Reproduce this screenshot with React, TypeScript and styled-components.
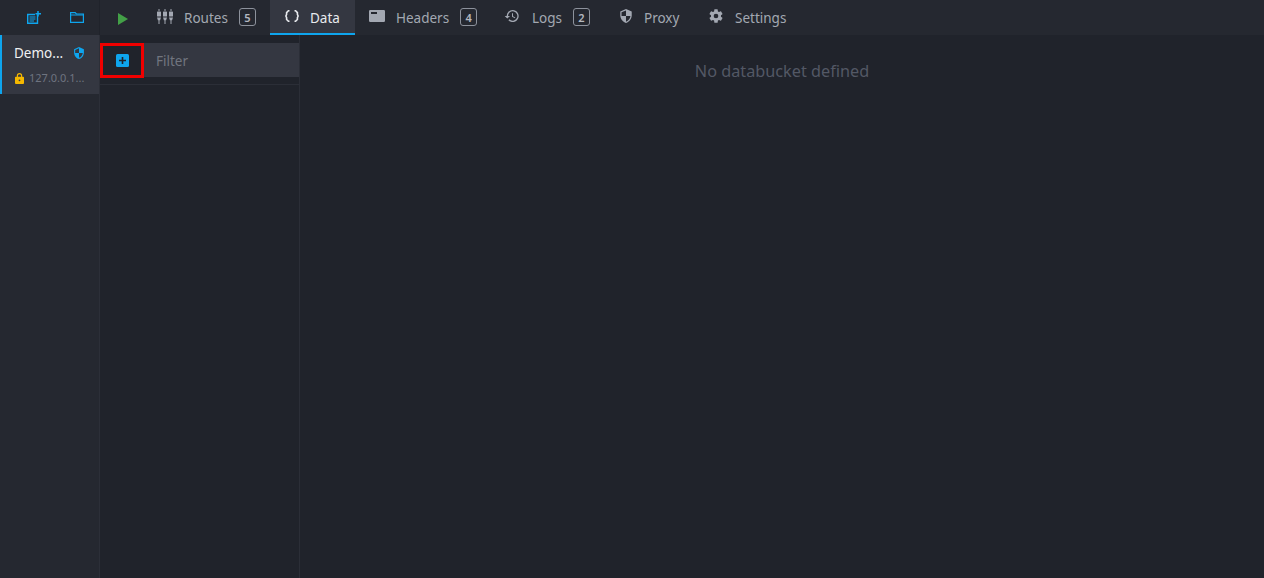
import React from "react";
import styled, { createGlobalStyle } from "styled-components";

const Global = createGlobalStyle`
  html, body { margin: 0; padding: 0; height: 100%; background: #20232b; overflow: hidden; }
  #root { height: 100%; }
  * { box-sizing: border-box; }
`;

const Page = styled.div`
  width: 1264px;
  height: 578px;
  display: grid;
  grid-template-columns: 100px 200px 1fr;
  grid-template-rows: 35px 1fr;
  font-family: "Noto Sans", "Open Sans", sans-serif;
  font-size: 13.5px;
  background: #20232b;
  color: #c5c8cf;
`;

const EnvTools = styled.div`
  background: #252830;
  border-right: 1px solid #20232b;
  display: flex;
  align-items: center;
  justify-content: flex-end;
  gap: 29px;
  padding: 0 15px 0 0;
`;

const TopBar = styled.nav`
  grid-column: 2 / 4;
  background: #252830;
  display: flex;
  align-items: stretch;
`;

const PlayButton = styled.div`
  width: 43px;
  display: flex;
  align-items: center;
  padding: 2px 0 0 18px;
`;

const Tab = styled.div<{ $active?: boolean; $w: number }>`
  width: ${(p) => p.$w}px;
  height: 35px;
  display: flex;
  align-items: center;
  padding: 2px 0 0 14px;
  background: ${(p) => (p.$active ? "#343741" : "transparent")};
  border-bottom: 2px solid ${(p) => (p.$active ? "#0ea5ee" : "transparent")};
  color: ${(p) => (p.$active ? "#e8eaee" : "#a3a8b2")};
`;

const TabIcon = styled.span<{ $w?: number; $shift?: number }>`
  width: ${(p) => p.$w ?? 27}px;
  display: flex;
  align-items: center;
  margin-top: -3px;
  & > svg {
    flex-shrink: 0;
    margin-left: ${(p) => p.$shift ?? 0}px;
  }
`;

const Badge = styled.span`
  width: 17px;
  height: 18px;
  margin: -1px 0 0 11px;
  border: 1px solid #8d929c;
  border-radius: 3px;
  display: flex;
  align-items: center;
  justify-content: center;
  font-size: 11px;
  font-weight: 600;
  color: #b4b8c0;
`;

const EnvList = styled.aside`
  background: #252830;
  border-right: 1px solid #2c2f38;
`;

const EnvRow = styled.div`
  height: 59px;
  background: #343741;
  border-left: 2px solid #0ea5ee;
  padding: 9px 0 0 12px;
`;

const EnvName = styled.div`
  display: flex;
  align-items: center;
  justify-content: space-between;
  padding-right: 14px;
  color: #f0f1f3;
  line-height: 18px;
`;

const EnvHost = styled.div`
  display: flex;
  align-items: center;
  gap: 5px;
  margin: 9px 0 0 1px;
  color: #6f7480;
  font-size: 11px;
  line-height: 14px;
  white-space: nowrap;
`;

const MenuColumn = styled.section`
  border-right: 1px solid #2b2e37;
  padding-top: 8px;
`;

const FilterRow = styled.div`
  display: flex;
  height: 35px;
`;

const AddButton = styled.div`
  width: 44px;
  height: 35px;
  border: 3px solid #f00000;
  display: flex;
  align-items: center;
  justify-content: center;
`;

const Filter = styled.div`
  flex: 1;
  height: 34px;
  background: #343741;
  color: #71757f;
  padding: 2px 0 0 12px;
  display: flex;
  align-items: center;
`;

const Divider = styled.div`
  height: 1px;
  background: #2b2e37;
  margin-top: 6px;
`;

const Main = styled.main`
  display: flex;
  justify-content: center;
  padding-top: 23px;
  color: #535865;
  font-size: 16.25px;
  line-height: 26px;
`;

const blue = "#0ea5ee";
const grey = "#a3a8b2";

const NewEnvIcon = () => (
  <svg width="14" height="13" viewBox="0 0 14 13" fill="none">
    <path d="M10.500 3.500V12.300H.7V3.500H8" stroke={blue} strokeWidth="1.400" />
    <path d="M2.500 6h6M2.500 8h6M2.500 10h4.500" stroke={blue} strokeWidth="1.100" />
    <path d="M11 0v5.500M8.500 2.700H14" stroke={blue} strokeWidth="1.500" />
  </svg>
);
const FolderIcon = () => (
  <svg width="14" height="11" viewBox="0 0 14 11" fill="none">
    <path d="M.6 10.400V.6h4.600l1.200 1.400h7v8.400z" stroke={blue} strokeWidth="1.200" />
    <path d="M1 3h12" stroke={blue} strokeWidth="1" />
  </svg>
);
const PlayIcon = () => (
  <svg width="10" height="12" viewBox="0 0 10 12">
    <path d="M0 0l10 6-10 6z" fill="#43a047" />
  </svg>
);
const RoutesIcon = () => (
  <svg width="16" height="15" viewBox="0 0 16 15" fill={grey}>
    <path d="M1.500 0h1v2h-1zM7.500 0h1v2h-1zM13.500 0h1v2h-1z" />
    <rect x="0" y="2.500" width="4" height="5" rx=".6" />
    <rect x="6" y="2.500" width="4" height="5" rx=".6" />
    <rect x="12" y="2.500" width="4" height="5" rx=".6" />
    <path d="M0 8.500h4l-1 3h-2zM6 8.500h4l-1 3h-2zM12 8.500h4l-1 3h-2z" />
    <path d="M1.500 11.500h1v3.500h-1zM7.500 11.500h1v3.500h-1zM13.500 11.500h1v3.500h-1z" />
  </svg>
);
const BracesIcon = () => (
  <svg width="14" height="12" viewBox="0 0 14 12" fill="none" stroke="#e8eaee" strokeWidth="1.600">
    <path d="M4.500.8H3.400L1.600 2.600v1.800L.9 6l.7 1.600v1.800l1.800 1.800h1.100" />
    <path d="M9.500.8h1.100l1.800 1.800v1.800l.7 1.600-.7 1.600v1.800l-1.800 1.800H9.500" />
  </svg>
);
const HeadersIcon = () => (
  <svg width="16" height="12" viewBox="0 0 16 12">
    <path fillRule="evenodd" fill={grey} d="M1.200 0h13.600A1.200 1.200 0 0 1 16 1.200v9.600a1.200 1.200 0 0 1-1.200 1.200H1.200A1.200 1.200 0 0 1 0 10.800V1.200A1.200 1.200 0 0 1 1.200 0zM2 2v2h6V2z" />
  </svg>
);
const HistoryIcon = () => (
  <svg width="16" height="16" viewBox="0 0 24 24" fill={grey}>
    <path d="M13 3a9 9 0 0 0-9 9H1l3.900 3.900L9 12H6a7 7 0 1 1 2.050 4.950L6.640 18.360A9 9 0 1 0 13 3zm-1 5v5l4.280 2.540.72-1.210-3.500-2.080V8z" />
  </svg>
);
const ShieldIcon = ({ color, size, cut }: { color: string; size: number; cut: string }) => (
  <svg width={size} height={size} viewBox="2 1 20 22">
    <path fill={color} d="M12 1L3 5v6c0 5.550 3.840 10.740 9 12 5.160-1.260 9-6.450 9-12V5z" />
    <path fill={cut} d="M12 3.200V12H5V6.300zM12 12h7c-.5 4.100-3.300 7.800-7 8.900z" />
  </svg>
);
const GearIcon = () => (
  <svg width="16" height="16" viewBox="0 0 24 24" fill={grey}>
    <path d="M19.430 12.980c.04-.32.07-.64.07-.98s-.03-.66-.07-.98l2.110-1.650a.5.5 0 0 0 .12-.64l-2-3.460a.5.5 0 0 0-.61-.22l-2.490 1a7.300 7.300 0 0 0-1.690-.98l-.38-2.650A.49.49 0 0 0 14 2h-4a.49.49 0 0 0-.49.420l-.38 2.650c-.61.250-1.170.590-1.690.980l-2.490-1a.5.5 0 0 0-.61.220l-2 3.460a.49.49 0 0 0 .12.640l2.110 1.650c-.04.320-.07.650-.07.980s.03.660.07.980l-2.110 1.650a.5.5 0 0 0-.12.640l2 3.460c.12.220.39.300.61.220l2.490-1c.52.400 1.080.730 1.690.980l.38 2.650c.03.240.24.420.49.420h4c.25 0 .46-.18.49-.42l.38-2.650c.61-.25 1.170-.59 1.690-.98l2.490 1c.23.090.49 0 .61-.22l2-3.460a.5.5 0 0 0-.12-.64zM12 15.500a3.500 3.500 0 1 1 0-7 3.500 3.500 0 0 1 0 7z" />
  </svg>
);
const LockIcon = () => (
  <svg width="9" height="11" viewBox="0 0 10 12">
    <path fill="#f5b800" fillRule="evenodd" d="M2 4V3a3 3 0 0 1 6 0v1h1a1 1 0 0 1 1 1v6a1 1 0 0 1-1 1H1a1 1 0 0 1-1-1V5a1 1 0 0 1 1-1zm1.300 0h3.400V3a1.700 1.700 0 0 0-3.400 0zM5 7a1 1 0 1 0 0 2 1 1 0 0 0 0-2z" />
  </svg>
);
const AddIcon = () => (
  <svg width="13" height="13" viewBox="0 0 13 13">
    <rect width="13" height="13" rx="1.500" fill="#0ea5ee" />
    <path d="M6.500 3v7M3 6.500h7" stroke="#20232b" strokeWidth="1.600" />
  </svg>
);

export default function App() {
  return (
    <Page>
      <Global />
      <EnvTools>
        <NewEnvIcon />
        <FolderIcon />
      </EnvTools>
      <TopBar>
        <PlayButton><PlayIcon /></PlayButton>
        <Tab $w={127}>
          <TabIcon><RoutesIcon /></TabIcon>Routes<Badge>5</Badge>
        </Tab>
        <Tab $w={85} $active>
          <TabIcon $w={26} $shift={1}><BracesIcon /></TabIcon>Data
        </Tab>
        <Tab $w={136}>
          <TabIcon><HeadersIcon /></TabIcon>Headers<Badge>4</Badge>
        </Tab>
        <Tab $w={114}>
          <TabIcon $shift={-1}><HistoryIcon /></TabIcon>Logs<Badge>2</Badge>
        </Tab>
        <Tab $w={90}>
          <TabIcon $w={25}><ShieldIcon color={grey} size={14} cut="#252830" /></TabIcon>Proxy
        </Tab>
        <Tab $w={110}>
          <TabIcon $w={26} $shift={-1}><GearIcon /></TabIcon>Settings
        </Tab>
      </TopBar>
      <EnvList>
        <EnvRow>
          <EnvName>
            Demo...
            <ShieldIcon color="#0ea5ee" size={12} cut="#343741" />
          </EnvName>
          <EnvHost>
            <LockIcon />
            127.0.0.1...
          </EnvHost>
        </EnvRow>
      </EnvList>
      <MenuColumn>
        <FilterRow>
          <AddButton><AddIcon /></AddButton>
          <Filter>Filter</Filter>
        </FilterRow>
        <Divider />
      </MenuColumn>
      <Main>No databucket defined</Main>
    </Page>
  );
}
